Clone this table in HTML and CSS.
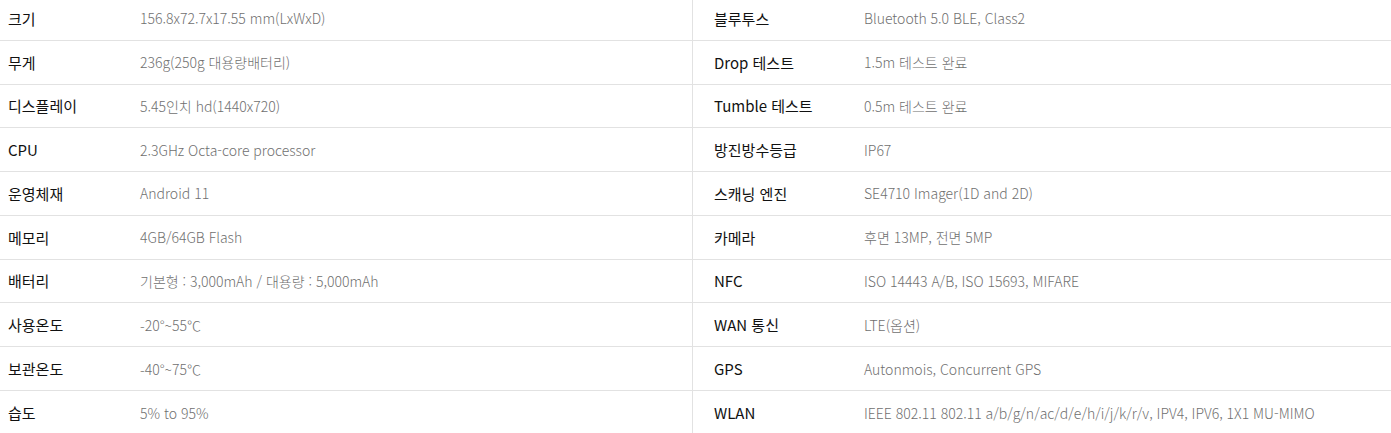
FILE: index.html
```html
<!DOCTYPE html>
<html lang="ko">
<head>
<meta charset="utf-8">
<link rel="stylesheet" href="styles.css">
</head>
<body>
<div class="spec">
  <div class="col col-left">
    <div class="row"><div class="k">크기</div><div class="v">156.8x72.7x17.55 mm(LxWxD)</div></div>
    <div class="row"><div class="k">무게</div><div class="v">236g(250g 대용량배터리)</div></div>
    <div class="row"><div class="k">디스플레이</div><div class="v">5.45인치 hd(1440x720)</div></div>
    <div class="row"><div class="k">CPU</div><div class="v">2.3GHz Octa-core processor</div></div>
    <div class="row"><div class="k">운영체재</div><div class="v">Android 11</div></div>
    <div class="row"><div class="k">메모리</div><div class="v">4GB/64GB Flash</div></div>
    <div class="row"><div class="k">배터리</div><div class="v">기본형 : 3,000mAh / 대용량 : 5,000mAh</div></div>
    <div class="row"><div class="k">사용온도</div><div class="v">-20°~55℃</div></div>
    <div class="row"><div class="k">보관온도</div><div class="v">-40°~75℃</div></div>
    <div class="row"><div class="k">습도</div><div class="v">5% to 95%</div></div>
  </div>
  <div class="col col-right">
    <div class="row"><div class="k">블루투스</div><div class="v">Bluetooth 5.0 BLE, Class2</div></div>
    <div class="row"><div class="k">Drop 테스트</div><div class="v">1.5m 테스트 완료</div></div>
    <div class="row"><div class="k">Tumble 테스트</div><div class="v">0.5m 테스트 완료</div></div>
    <div class="row"><div class="k">방진방수등급</div><div class="v">IP67</div></div>
    <div class="row"><div class="k">스캐닝 엔진</div><div class="v">SE4710 Imager(1D and 2D)</div></div>
    <div class="row"><div class="k">카메라</div><div class="v">후면 13MP, 전면 5MP</div></div>
    <div class="row"><div class="k">NFC</div><div class="v">ISO 14443 A/B, ISO 15693, MIFARE</div></div>
    <div class="row"><div class="k">WAN 통신</div><div class="v">LTE(옵션)</div></div>
    <div class="row"><div class="k">GPS</div><div class="v">Autonmois, Concurrent GPS</div></div>
    <div class="row"><div class="k">WLAN</div><div class="v">IEEE 802.11 802.11 a/b/g/n/ac/d/e/h/i/j/k/r/v, IPV4, IPV6, 1X1 MU-MIMO</div></div>
  </div>
</div>
</body>
</html>
```
FILE: styles.css
```css
html, body {
  margin: 0;
  padding: 0;
  background: #fff;
  overflow: hidden;
}
body {
  font-family: "Noto Sans CJK KR", "Noto Sans", sans-serif;
}
.spec {
  display: flex;
  margin-top: -3px;
}
.col {
  display: flex;
  flex-direction: column;
}
.col-left {
  width: 693px;
  border-right: 1px solid #e2e2e2;
  box-sizing: border-box;
}
.col-right {
  flex: 1;
}
.row {
  display: flex;
  align-items: center;
  height: 43.78px;
  box-sizing: border-box;
  border-bottom: 1px solid #e2e2e2;
}
.row:last-child {
  border-bottom: none;
}
.k {
  font-size: 15px;
  color: #111;
  font-weight: 400;
  box-sizing: border-box;
  flex: none;
}
.col-left .k {
  width: 140px;
  padding-left: 8px;
}
.col-right .k {
  width: 171px;
  padding-left: 21px;
}
.v {
  font-size: 14px;
  color: #6f6f6f;
  font-weight: 300;
  white-space: nowrap;
}
```
